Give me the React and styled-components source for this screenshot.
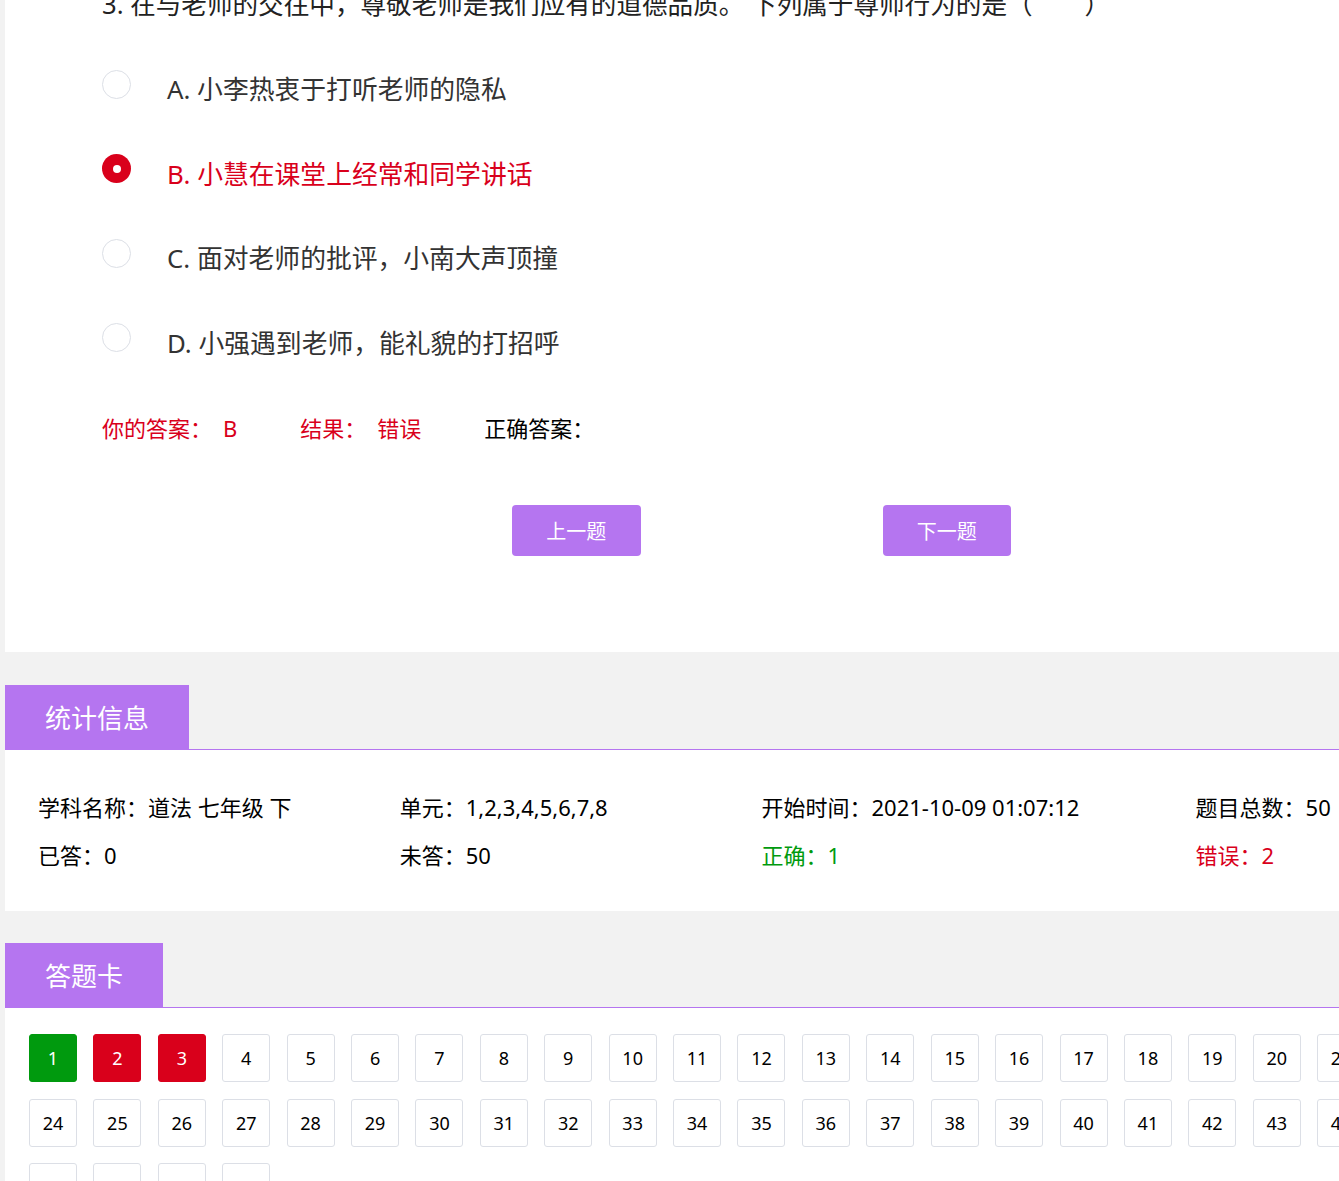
import React from "react";
import styled, { createGlobalStyle } from "styled-components";

const PURPLE = "#b575f0";
const RED = "#d9001b";
const GREEN = "#009a0e";

const Global = createGlobalStyle`
  html, body { margin: 0; padding: 0; overflow: hidden; background: #f2f2f2; }
  body { font-family: "Noto Sans", "Noto Sans CJK SC", sans-serif; color: #333; }
  * { box-sizing: border-box; }
`;

const Page = styled.div`
  width: 1513px;
  margin: 0 5px;
  display: flex;
  flex-direction: column;
`;

const QuestionPanel = styled.section`
  background: #fff;
  margin-top: -35px;
  padding: 20px 0 96px 97px;
`;

const Title = styled.div`
  font-size: 25.6px;
  line-height: 40px;
  color: #222;
  margin-bottom: 21px;
  white-space: nowrap;
`;

const Blank = styled.span`
  display: inline-block;
  width: 52px;
`;

const Option = styled.label`
  display: flex;
  align-items: center;
  height: 84.5px;
  font-size: 25.8px;
  color: ${(p) => (p.$checked ? RED : "#333")};
`;

const Radio = styled.span`
  width: 29px;
  height: 29px;
  border-radius: 50%;
  margin: 0 36px 8px 0;
  border: ${(p) => (p.$checked ? "none" : "1px solid #dcdfe6")};
  background: ${(p) => (p.$checked ? RED : "#fff")};
  display: flex;
  align-items: center;
  justify-content: center;
  &::after {
    content: "";
    display: ${(p) => (p.$checked ? "block" : "none")};
    width: 8px;
    height: 8px;
    border-radius: 50%;
    background: #fff;
  }
`;

const AnswerRow = styled.div`
  display: flex;
  gap: 63px;
  margin-top: 24px;
  font-size: 22px;
  line-height: 40px;
`;

const AnswerItem = styled.div`
  color: ${(p) => p.$color};
  display: flex;
`;

const AnswerValue = styled.span`
  margin-left: 11px;
`;

const ButtonRow = styled.div`
  display: flex;
  justify-content: center;
  gap: 242px;
  margin: 57px 0 0 -97px;
`;

const NavButton = styled.button`
  width: 128.5px;
  height: 51px;
  border: none;
  border-radius: 4px;
  background: ${PURPLE};
  color: #fff;
  font-family: inherit;
  font-size: 20px;
  cursor: pointer;
`;

const Section = styled.section`
  margin-top: ${(p) => p.$top}px;
  display: flex;
  flex-direction: column;
`;

const TabBar = styled.div`
  display: flex;
  border-bottom: 1px solid ${PURPLE};
`;

const Tab = styled.div`
  height: 64px;
  padding: 0 40px;
  background: ${PURPLE};
  color: #fff;
  font-size: 26px;
  display: flex;
  align-items: center;
`;

const StatsBody = styled.div`
  background: #fff;
  padding: 33px 33px 32px;
  display: grid;
  grid-template-columns: 25% 25% 30% 20%;
  font-size: 22px;
  line-height: 48px;
  color: #000;
`;

const Stat = styled.div`
  color: ${(p) => p.$color || "#000"};
  white-space: nowrap;
`;

const CardBody = styled.div`
  background: #fff;
  padding: 26px 24px 40px;
  display: grid;
  grid-template-columns: repeat(23, 48px);
  justify-content: space-between;
  row-gap: 16.5px;
`;

const Cell = styled.div`
  width: 48px;
  height: 48px;
  border-radius: 3px;
  border: 1px solid ${(p) => p.$bg || "#dcdfe6"};
  background: ${(p) => p.$bg || "#fff"};
  color: ${(p) => (p.$bg ? "#fff" : "#000")};
  font-size: 18px;
  display: flex;
  align-items: center;
  justify-content: center;
`;

const options = [
  { key: "A", text: "小李热衷于打听老师的隐私" },
  { key: "B", text: "小慧在课堂上经常和同学讲话", checked: true },
  { key: "C", text: "面对老师的批评，小南大声顶撞" },
  { key: "D", text: "小强遇到老师，能礼貌的打招呼" },
];

const cellColor = (n) => (n === 1 ? GREEN : n === 2 || n === 3 ? RED : null);

export default function App() {
  return (
    <>
      <Global />
      <Page>
        <QuestionPanel>
          <Title>
            3. 在与老师的交往中，尊敬老师是我们应有的道德品质。 下列属于尊师行为的是（<Blank />）
          </Title>
          {options.map((o) => (
            <Option key={o.key} $checked={o.checked}>
              <Radio $checked={o.checked} />
              {o.key}. {o.text}
            </Option>
          ))}
          <AnswerRow>
            <AnswerItem $color={RED}>
              你的答案：<AnswerValue>B</AnswerValue>
            </AnswerItem>
            <AnswerItem $color={RED}>
              结果：<AnswerValue>错误</AnswerValue>
            </AnswerItem>
            <AnswerItem $color="#000">正确答案：</AnswerItem>
          </AnswerRow>
          <ButtonRow>
            <NavButton>上一题</NavButton>
            <NavButton>下一题</NavButton>
          </ButtonRow>
        </QuestionPanel>

        <Section $top={33}>
          <TabBar>
            <Tab>统计信息</Tab>
          </TabBar>
          <StatsBody>
            <Stat>学科名称：道法 七年级 下</Stat>
            <Stat>单元：1,2,3,4,5,6,7,8</Stat>
            <Stat>开始时间：2021-10-09 01:07:12</Stat>
            <Stat>题目总数：50</Stat>
            <Stat>已答：0</Stat>
            <Stat>未答：50</Stat>
            <Stat $color={GREEN}>正确：1</Stat>
            <Stat $color={RED}>错误：2</Stat>
          </StatsBody>
        </Section>

        <Section $top={32}>
          <TabBar>
            <Tab>答题卡</Tab>
          </TabBar>
          <CardBody>
            {Array.from({ length: 50 }, (_, i) => i + 1).map((n) => (
              <Cell key={n} $bg={cellColor(n)}>
                {n}
              </Cell>
            ))}
          </CardBody>
        </Section>
      </Page>
    </>
  );
}
